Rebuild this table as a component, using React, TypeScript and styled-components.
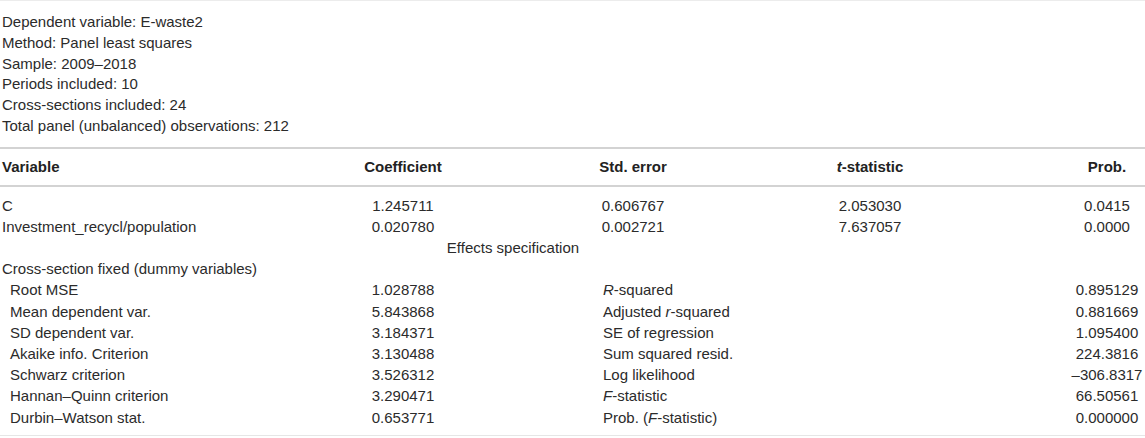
import React from "react";
import styled, { createGlobalStyle } from "styled-components";

const Global = createGlobalStyle`
  html, body { margin: 0; padding: 0; background: #ffffff; }
  body { font-family: "Liberation Sans", Arial, sans-serif; color: #2b2b2b; }
`;

const Sheet = styled.div`
  width: 1145px;
  overflow: hidden;
  border-top: 1px solid #ececec;
`;

const Info = styled.div`
  padding: 11px 0 10px 2px;
  font-size: 15px;
  line-height: 20.75px;
`;

const InfoLine = styled.div``;

const Head = styled.div`
  border-top: 2px solid #d3d3d3;
  border-bottom: 2px solid #d3d3d3;
  padding: 8px 0 8px;
`;

const Body = styled.div`
  padding: 8px 0 7px;
  border-bottom: 1px solid #e6e6e6;
`;

const Row = styled.div<{ $head?: boolean }>`
  display: grid;
  grid-template-columns: 283px 240px 220px 254px 220px;
  width: 1217px;
  font-size: 15px;
  line-height: ${(p) => (p.$head ? "20px" : "21.2px")};
  font-weight: ${(p) => (p.$head ? 700 : 400)};
  color: ${(p) => (p.$head ? "#222" : "#2b2b2b")};
`;

const Cell = styled.div<{ $align?: "left" | "center"; $indent?: number; $span?: string }>`
  text-align: ${(p) => p.$align || "center"};
  padding-left: ${(p) => p.$indent || 0}px;
  white-space: nowrap;
  ${(p) => (p.$span ? `grid-column: ${p.$span};` : "")}
`;

const I = styled.i`
  font-style: italic;
`;

const info = [
  "Dependent variable: E-waste2",
  "Method: Panel least squares",
  "Sample: 2009–2018",
  "Periods included: 10",
  "Cross-sections included: 24",
  "Total panel (unbalanced) observations: 212",
];

const coefRows = [
  ["C", "1.245711", "0.606767", "2.053030", "0.0415"],
  ["Investment_recycl/population", "0.020780", "0.002721", "7.637057", "0.0000"],
];

const stats: [string, string, React.ReactNode, string][] = [
  ["Root MSE", "1.028788", <><I>R</I>-squared</>, "0.895129"],
  ["Mean dependent var.", "5.843868", <>Adjusted <I>r</I>-squared</>, "0.881669"],
  ["SD dependent var.", "3.184371", "SE of regression", "1.095400"],
  ["Akaike info. Criterion", "3.130488", "Sum squared resid.", "224.3816"],
  ["Schwarz criterion", "3.526312", "Log likelihood", "–306.8317"],
  ["Hannan–Quinn criterion", "3.290471", <><I>F</I>-statistic</>, "66.50561"],
  ["Durbin–Watson stat.", "0.653771", <>Prob. (<I>F</I>-statistic)</>, "0.000000"],
];

export default function App() {
  return (
    <>
      <Global />
      <Sheet>
        <Info>
          {info.map((t) => (
            <InfoLine key={t}>{t}</InfoLine>
          ))}
        </Info>
        <Head>
          <Row $head>
            <Cell $align="left" $indent={2}>Variable</Cell>
            <Cell>Coefficient</Cell>
            <Cell>Std. error</Cell>
            <Cell><I>t</I>-statistic</Cell>
            <Cell>Prob.</Cell>
          </Row>
        </Head>
        <Body>
          {coefRows.map((r) => (
            <Row key={r[0]}>
              <Cell $align="left" $indent={2}>{r[0]}</Cell>
              <Cell>{r[1]}</Cell>
              <Cell>{r[2]}</Cell>
              <Cell>{r[3]}</Cell>
              <Cell>{r[4]}</Cell>
            </Row>
          ))}
          <Row>
            <Cell $span="2 / 4">Effects specification</Cell>
          </Row>
          <Row>
            <Cell $align="left" $indent={2} $span="1 / 3">Cross-section fixed (dummy variables)</Cell>
          </Row>
          {stats.map((s) => (
            <Row key={s[0]}>
              <Cell $align="left" $indent={10}>{s[0]}</Cell>
              <Cell>{s[1]}</Cell>
              <Cell $align="left" $indent={80} $span="3 / 5">{s[2]}</Cell>
              <Cell>{s[3]}</Cell>
            </Row>
          ))}
        </Body>
      </Sheet>
    </>
  );
}
